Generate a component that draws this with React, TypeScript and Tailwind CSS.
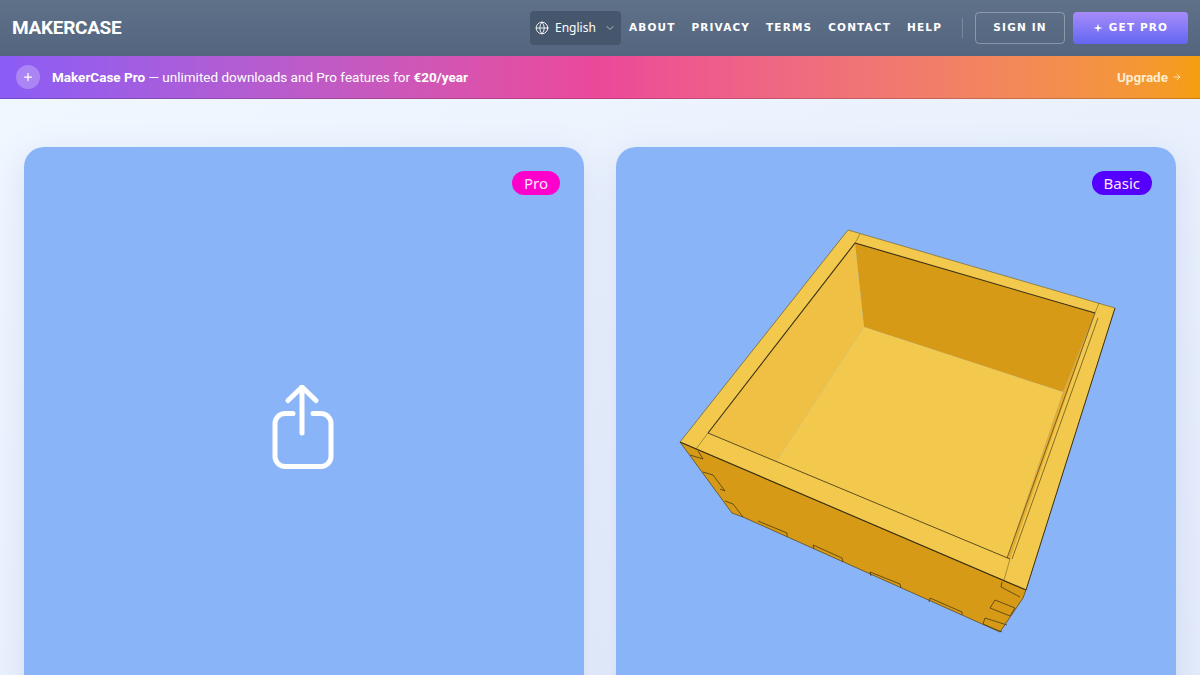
import React from 'react';
import { Globe, ChevronDown, Plus, ArrowRight } from 'lucide-react';

const navLinks = ['ABOUT', 'PRIVACY', 'TERMS', 'CONTACT', 'HELP'];

const wide = "font-['DejaVu_Sans',sans-serif] font-bold";

const Sparkle = ({ className }: { className?: string }) => (
  <svg viewBox="0 0 12 12" className={className} fill="currentColor">
    <path d="M6 0.5 L7.1 4.9 L11.5 6 L7.1 7.1 L6 11.5 L4.9 7.1 L0.5 6 L4.9 4.9 Z" />
  </svg>
);

const Header = () => (
  <header className="h-14 flex items-center justify-between pl-3 pr-3 bg-gradient-to-b from-[#5f7189] to-[#54667f]">
    <div className="font-['Roboto',sans-serif] font-bold text-[19px] text-white tracking-[-0.3px]">MAKERCASE</div>
    <div className="flex items-center">
      <button className="w-[91px] h-[34px] flex items-center justify-center gap-1.5 rounded bg-[#46576d] text-white font-['Noto_Sans',sans-serif] text-xs">
        <Globe className="w-3.5 h-3.5" strokeWidth={1.5} />
        <span>English</span>
        <ChevronDown className="w-3 h-3 ml-0.5 opacity-80" strokeWidth={1.5} />
      </button>
      <nav className={`flex items-center gap-4 ml-2 text-[10.5px] tracking-[1.15px] text-white ${wide}`}>
        {navLinks.map((l) => (
          <a key={l}>{l}</a>
        ))}
      </nav>
      <div className="w-px h-5 bg-white/20 ml-5" />
      <button className={`w-[90px] h-8 ml-3 rounded border border-white/30 text-white text-[10.5px] tracking-[1.15px] ${wide}`}>
        SIGN IN
      </button>
      <button className={`w-[115px] h-8 ml-2 flex items-center justify-center gap-1.5 rounded bg-gradient-to-b from-[#a78bfa] to-[#6366f1] text-white text-[10.5px] tracking-[1.15px] ${wide}`}>
        <Sparkle className="w-2.5 h-2.5" />
        GET PRO
      </button>
    </div>
  </header>
);

const Banner = () => (
  <div className="h-[43px] flex items-center justify-between pl-[16px] pr-[18px] border-b border-[#00000030] bg-gradient-to-r from-[#8b5cf6] via-[#ec4899] to-[#f59e0b] text-white font-['Roboto',sans-serif] text-[13.5px]">
    <div className="flex items-center">
      <span className="w-[24px] h-[24px] rounded-full bg-white/25 flex items-center justify-center">
        <Plus className="w-3 h-3" strokeWidth={2.5} />
      </span>
      <span className="ml-3 font-normal">
        <b className="font-bold">MakerCase Pro</b> — unlimited downloads and Pro features for <b className="font-bold">€20/year</b>
      </span>
    </div>
    <a className="flex items-center gap-1 font-bold text-[#ffecd0]">
      Upgrade <ArrowRight className="w-2.5 h-2.5" />
    </a>
  </div>
);

const Badge = ({ label, color }: { label: string; color: string }) => (
  <span className={`absolute top-6 right-6 h-6 px-3 rounded-full flex items-center text-[15px] text-[#ffe6ff] font-['Noto_Sans',sans-serif] ${color}`}>
    {label}
  </span>
);

const ShareIcon = () => (
  <svg width="64" height="88" viewBox="0 0 64 88" fill="none" stroke="white" strokeWidth="5" strokeLinecap="round" strokeLinejoin="round">
    <path d="M21 28.5 H13 A10 10 0 0 0 3 38.5 V71.5 A10 10 0 0 0 13 81.5 H49 A10 10 0 0 0 59 71.5 V38.5 A10 10 0 0 0 49 28.5 H41" />
    <path d="M30 48 V2" />
    <path d="M16 15.5 L30 2 L44 15.5" />
  </svg>
);

// card origin is (616,147); the drawing is in page coordinates shifted by that
const BoxDrawing = () => (
  <svg className="block w-full h-full" viewBox="616 147 560 560" strokeLinejoin="round">
    {/* front face */}
    <polygon points="680,442 1026,590 1023,598 1000,632 743,517 732,513" fill="#d69a17" stroke="#5c4a1a" strokeWidth="0.8" />
    {/* inside */}
    <polygon points="855,243 1095,313 1063,392 864,327" fill="#d69a17" />
    <polygon points="855,243 864,327 776,462 708,433" fill="#efc044" />
    <polygon points="864,327 1063,392 1007,558 776,462" fill="#f2c94c" />
    <polygon points="1095,313 1063,392 1007,558 1012,559" fill="#e3ac2e" />
    {/* rim */}
    <path fillRule="evenodd" d="M848,230 L1115,308 L1026,590 L680,442 Z M855,243 L708,433 L1010,559 L1095,313 Z" fill="#f2c94c" />
    <g fill="none" stroke="#3a2e10" strokeWidth="0.8">
      <path d="M855,243 L1095,313" strokeWidth="1.1" />
      <path d="M855,243 L708,433" strokeWidth="1.1" />
      <path d="M708,433 L1010,559" />
      <path d="M1095,313 L1007,558" strokeWidth="0.6" />
      <path d="M1098,318 L1012,559" strokeWidth="0.6" />
      <path d="M1115,308 L1026,590" strokeWidth="1" />
      <path d="M680,442 L1026,590" strokeWidth="1.1" />
      <path d="M848,230 L680,442" strokeWidth="0.7" stroke="#6b5a20" />
      <path d="M848,230 L1115,308" strokeWidth="0.6" stroke="#6b5a20" />
      <path d="M860,234 L855,243 M1099,303 L1095,313 M696,449 L708,433 M1004,580 L1010,559" strokeWidth="0.4" />
      {/* finger joints */}
      <path d="M758,521 L787,533 L787,537 M813,545 L842,558 L843,562 M813,545 L814,549 M870,572 L900,584 L901,588 M870,572 L871,576 M930,598 L962,612 L962,615 M930,598 L929,602" strokeWidth="0.7" />
      <path d="M690,455 L703,459 L698,451 M703,472 L713,475 L725,491 L720,489 M725,501 L733,504 L743,517" strokeWidth="0.7" />
      <path d="M1002,582 L1001,587 L1020,597 M995,600 L1015,608 L1010,616 L990,608 Z M985,618 L1007,625 M985,618 L983,624 L1002,632" strokeWidth="0.7" />
    </g>
  </svg>
);

export default function App() {
  return (
    <div className="h-[675px] overflow-hidden bg-gradient-to-br from-[#f2f8ff] to-[#e4ebfb]">
      <Header />
      <Banner />
      <main className="grid grid-cols-2 gap-8 px-6 pt-12">
        <div className="relative h-[560px] rounded-[20px] bg-[#8ab4f8] shadow-[0_8px_32px_rgba(100,130,200,0.18)] flex justify-center pt-[238px]">
          <ShareIcon />
          <Badge label="Pro" color="bg-[#ff00cc]" />
        </div>
        <div className="relative h-[560px] rounded-[20px] bg-[#8ab4f8] shadow-[0_8px_32px_rgba(100,130,200,0.18)] overflow-hidden">
          <BoxDrawing />
          <Badge label="Basic" color="bg-[#5500ff]" />
        </div>
      </main>
    </div>
  );
}
